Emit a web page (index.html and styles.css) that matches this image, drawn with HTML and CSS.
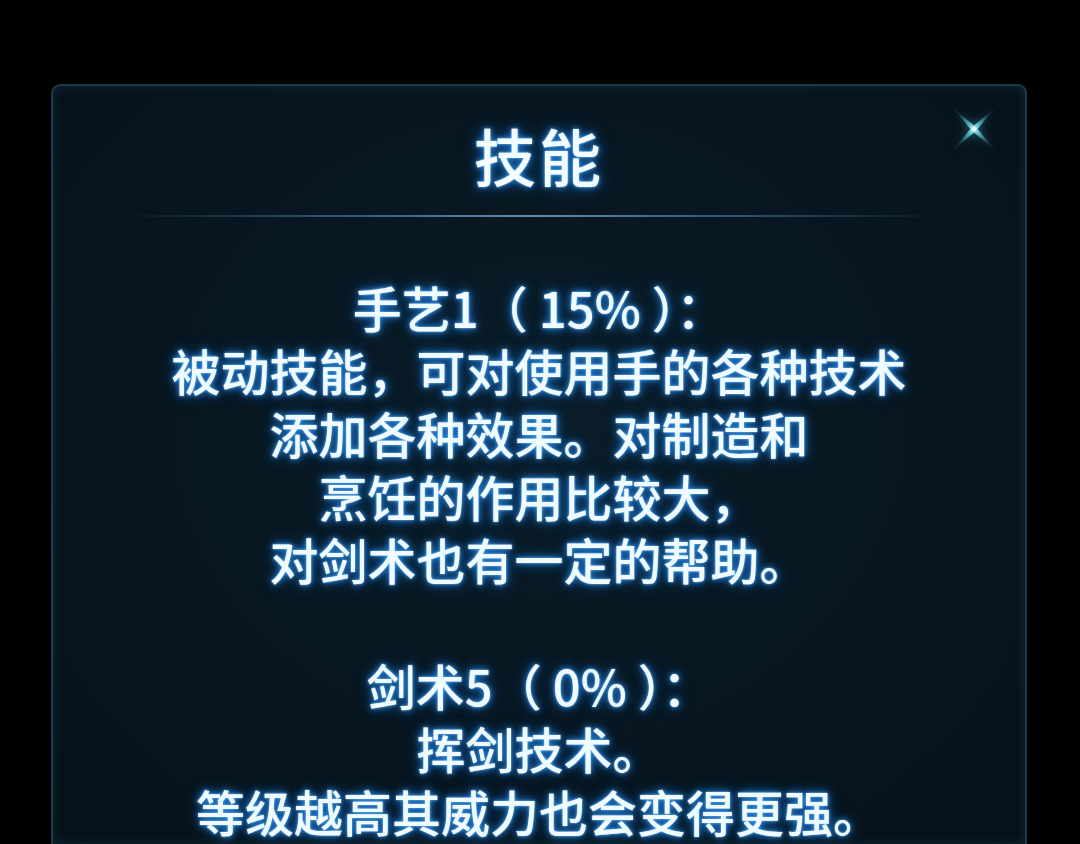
FILE: index.html
```html
<!DOCTYPE html>
<html lang="zh-CN">
<head>
<meta charset="utf-8">
<title>技能</title>
<link rel="stylesheet" href="styles.css">
</head>
<body>
<div class="panel">
  <svg class="close" width="46" height="46" viewBox="0 0 46 46" aria-label="关闭">
    <defs>
      <radialGradient id="cg" cx="50%" cy="50%" r="50%">
        <stop offset="0" stop-color="#c8f6f8"/>
        <stop offset="0.3" stop-color="#5bbcc6"/>
        <stop offset="1" stop-color="#2f7884" stop-opacity="0.35"/>
      </radialGradient>
    </defs>
    <polygon points="3,3 25,21 43,43 21,25" fill="url(#cg)"/>
    <polygon points="43,3 25,25 3,43 21,21" fill="url(#cg)"/>
    <circle cx="23" cy="23" r="2.4" fill="#e6fdff"/>
  </svg>
  <h1 class="title">技能</h1>
  <div class="sep"></div>
  <div class="body">
    <p class="line">手艺1（ 15% ）：</p>
    <p class="line">被动技能，可对使用手的各种技术</p>
    <p class="line">添加各种效果。对制造和</p>
    <p class="line">烹饪的作用比较大，</p>
    <p class="line">对剑术也有一定的帮助。</p>
    <p class="line blank">&nbsp;</p>
    <p class="line">剑术5（ 0% ）：</p>
    <p class="line">挥剑技术。</p>
    <p class="line">等级越高其威力也会变得更强。</p>
  </div>
</div>
</body>
</html>
```
FILE: styles.css
```css
html, body {
  margin: 0;
  padding: 0;
  background: #000;
  height: 100%;
  overflow: hidden;
}
body {
  font-family: "Noto Sans CJK SC", "Noto Sans", sans-serif;
  padding-top: 84px;
  box-sizing: border-box;
}
.panel {
  position: relative;
  margin-left: 51px;
  width: 976px;
  height: 760px;
  box-sizing: border-box;
  border: 2px solid #1d3b47;
  border-bottom: none;
  border-radius: 9px 9px 0 0;
  background: radial-gradient(ellipse at 50% 45%, #0a1d29 0%, #071620 55%, #061219 100%);
  box-shadow: inset 0 0 10px rgba(40, 90, 110, 0.35);
}
.close {
  position: absolute;
  top: 20px;
  right: 28px;
  filter: drop-shadow(0 0 4px rgba(70, 170, 185, 0.6));
}
.title {
  margin: 0;
  padding-top: 29px;
  height: 80px;
  line-height: 80px;
  text-align: center;
  font-size: 62px;
  font-weight: 500;
  color: #f3fcff;
  text-shadow: 0 0 2px #8fd0ff, 0 0 6px #2a90f0, 0 0 15px rgba(20, 110, 210, 0.85);
  letter-spacing: 3px;
}
.sep {
  margin: 20px auto 0;
  width: 815px;
  height: 2px;
  background: linear-gradient(90deg, rgba(60,100,130,0) 0%, rgba(70,110,140,0.5) 18%, rgba(120,160,190,0.85) 50%, rgba(70,110,140,0.5) 82%, rgba(60,100,130,0) 100%);
  transform: translateX(-8px);
}
.body {
  margin-top: 58px;
  text-align: center;
}
.line {
  margin: 0;
  height: 63px;
  line-height: 63px;
  font-size: 49px;
  font-weight: 500;
  color: #f0fbff;
  text-shadow: 0 0 2px #8fd0ff, 0 0 6px #2a90f0, 0 0 13px rgba(20, 110, 210, 0.9);
  white-space: nowrap;
}
```
